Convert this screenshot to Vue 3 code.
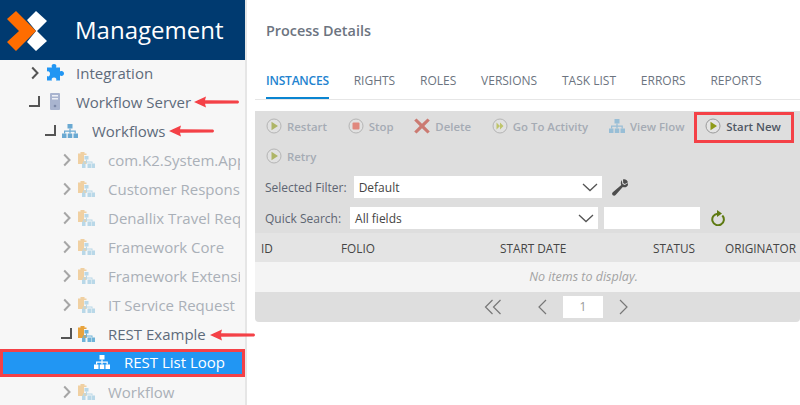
<script setup>
const rows = [
  { label: 'Integration', level: 0, toggle: 'chev', icon: 'puzzle', state: 'normal' },
  { label: 'Workflow Server', level: 0, toggle: 'elbow', icon: 'server', state: 'normal' },
  { label: 'Workflows', level: 1, toggle: 'elbow', icon: 'flow', state: 'normal' },
  { label: 'com.K2.System.Applications', level: 2, toggle: 'chev', icon: 'folder', state: 'dim' },
  { label: 'Customer Response Management', level: 2, toggle: 'chev', icon: 'folder', state: 'dim' },
  { label: 'Denallix Travel Request', level: 2, toggle: 'chev', icon: 'folder', state: 'dim' },
  { label: 'Framework Core', level: 2, toggle: 'chev', icon: 'folder', state: 'dim' },
  { label: 'Framework Extensions', level: 2, toggle: 'chev', icon: 'folder', state: 'dim' },
  { label: 'IT Service Request', level: 2, toggle: 'chev', icon: 'folder', state: 'dim' },
  { label: 'REST Example', level: 2, toggle: 'elbow', icon: 'folder', state: 'normal' },
  { label: 'REST List Loop', level: 3, toggle: 'none', icon: 'flow', state: 'selected' },
  { label: 'Workflow', level: 2, toggle: 'chev', icon: 'folder', state: 'dim' }
]
const tabs = ['Instances', 'Rights', 'Roles', 'Versions', 'Task List', 'Errors', 'Reports']
const tools = [
  { label: 'Restart', icon: 'play', off: true },
  { label: 'Stop', icon: 'stop', off: true },
  { label: 'Delete', icon: 'x', off: true },
  { label: 'Go To Activity', icon: 'go', off: true },
  { label: 'View Flow', icon: 'flow', off: true },
  { label: 'Start New', icon: 'play', off: false },
  { label: 'Retry', icon: 'play', off: true }
]
const cols = [
  { label: 'ID', w: 80 },
  { label: 'FOLIO', w: 159 },
  { label: 'START DATE', w: 153 },
  { label: 'STATUS', w: 72 },
  { label: 'ORIGINATOR', w: 75 }
]
const arrows = [
  { cls: 'a1' },
  { cls: 'a2' },
  { cls: 'a3' }
]
</script>

<template>
  <div class="page">
    <svg width="0" height="0" class="defs">
      <symbol id="flow" viewBox="0 0 16 14">
        <path d="M5.500 0h5v4.500h-5zM0 9.500h4.500V14H0zM5.750 9.500h4.500V14h-4.500zM11.500 9.500H16V14h-4.500z" />
        <path d="M7.400 4.500h1.200v2h5.200v3h-1.200V7.700H8.600v1.800H7.400V7.700H3.200v1.800H2v-3h5.400z" />
      </symbol>
    </svg>

    <aside class="side">
      <header class="brand">
        <svg class="logo" width="48" height="40" viewBox="0 0 48 40">
          <path fill="#fff" d="M27 9 36 0 47 10 37 20 47 30 36 40 27 31 36 20Z" />
          <path fill="#ff6d00" d="M7 8 16 0 36 20 16 40 7 31 19 20Z" />
        </svg>
        <span class="brand-name">Management</span>
      </header>
      <ul class="tree">
        <li
          v-for="r in rows"
          :key="r.label"
          class="row"
          :class="r.state"
          :style="{ paddingLeft: 28 + r.level * 16 + 'px' }"
        >
          <span class="toggle">
            <svg v-if="r.toggle === 'chev'" width="8" height="14" viewBox="0 0 8 14">
              <path d="M1.200 1.500 6.500 7l-5.300 5.500" fill="none" stroke="currentColor" stroke-width="2" />
            </svg>
            <svg v-else-if="r.toggle === 'elbow'" class="elbow" width="11" height="11" viewBox="0 0 11 11">
              <path d="M10 0v10H0" fill="none" stroke="currentColor" stroke-width="2" />
            </svg>
          </span>
          <span class="ico">
            <svg v-if="r.icon === 'puzzle'" width="18" height="17" viewBox="0 0 18 17">
              <path fill="#2196f3" d="M6 3.500C5 1.500 6 0 8 0s3 1.500 2 3.500H14V7.500C16 6.500 18 7.500 18 9.500s-2 3-4 2V16.500H10C11 15 10 13.500 8 13.500S5 15 6 16.500H1V12C2.500 13 4 12 4 9.800S2.500 6.700 1 7.500V3.500Z" />
            </svg>
            <svg v-else-if="r.icon === 'server'" class="server-ico" width="10" height="17" viewBox="0 0 10 17">
              <rect width="10" height="17" rx="1" fill="#a9b4cf" />
              <rect x="2" y="2" width="6" height="1.500" fill="#eef0f6" />
              <rect x="2" y="5" width="6" height="1.500" fill="#eef0f6" />
              <circle cx="5" cy="13" r="1.300" fill="#7c88a8" />
            </svg>
            <svg v-else-if="r.icon === 'flow'" class="flow-ico" width="16" height="14">
              <use href="#flow" />
            </svg>
            <svg v-else width="17" height="16" viewBox="0 0 17 16">
              <path fill="#e8a33d" d="M0 1.500h2.500V0h4v1.500H8.500V12H0Z" />
              <path fill="#f6f6f6" d="M6 3h6v6H6z" />
              <path fill="#6fb3d8" d="M6.500 4h4v3.500h-4zM4 11.500h3.500V16H4zM9.500 11.500H13V16H9.500zM13.500 11.500H17V16h-3.500z" />
              <path fill="#6fb3d8" d="M8 7.500h1v2h5.500v2h-1v-1H9v1H8v-1H6v1H5v-2h3z" />
            </svg>
          </span>
          <span class="lbl">{{ r.label }}</span>
        </li>
      </ul>
    </aside>

    <main class="main">
      <h1 class="title">Process Details</h1>
      <nav class="tabs">
        <span v-for="(t, i) in tabs" :key="t" class="tab" :class="{ on: i === 0 }">{{ t }}</span>
      </nav>

      <section class="panel">
        <div class="tools">
          <span v-for="t in tools" :key="t.label" class="tool" :class="{ off: t.off }">
            <svg v-if="t.icon === 'play'" width="16" height="16" viewBox="0 0 16 16">
              <circle cx="8" cy="8" r="7" fill="#e4e4e4" stroke="#9a9a9a" />
              <path d="M5.500 3.800 12 8l-6.500 4.200Z" fill="#8f9b17" />
            </svg>
            <svg v-else-if="t.icon === 'stop'" width="16" height="16" viewBox="0 0 16 16">
              <circle cx="8" cy="8" r="7" fill="#e4e4e4" stroke="#9a9a9a" />
              <rect x="4.500" y="4.500" width="7" height="7" rx="1" fill="#e2503f" />
            </svg>
            <svg v-else-if="t.icon === 'x'" width="16" height="16" viewBox="0 0 16 16">
              <path d="M2.500 .5 8 5.800 13.500 .5 15.800 2.500 10.300 8 15.800 13.500 13.500 15.500 8 10.200 2.500 15.500 .2 13.500 5.700 8 .2 2.500Z" fill="#c0392b" />
            </svg>
            <svg v-else-if="t.icon === 'go'" width="16" height="16" viewBox="0 0 16 16">
              <circle cx="8" cy="8" r="7" fill="#e4e4e4" stroke="#9a9a9a" />
              <path d="M4.500 4.500 8 8l-3.500 3.500zM8 4.500 11.500 8 8 11.500z" fill="#a9b31f" />
            </svg>
            <svg v-else class="tool-flow" width="16" height="14"><use href="#flow" /></svg>
            <span>{{ t.label }}</span>
          </span>
        </div>

        <div class="filter first">
          <label class="flabel">Selected Filter:</label>
          <span class="select">
            Default
            <svg width="16" height="9" viewBox="0 0 16 9"><path d="M1 1l7 6.500L15 1" fill="none" stroke="#555" stroke-width="1.300" /></svg>
          </span>
          <svg class="wrench" width="16" height="17" viewBox="0 0 16 17">
            <path fill="#4d4d4d" d="M10 1C8.600 2.500 8.500 4.500 9.300 6L.8 13.300C-.3 14.300 0 15.700.8 16.300S2.800 17 3.600 16.100L10.800 8C13 8.800 15 8.200 16 6L15.800 4 12.800 6 10.500 5 10 2.800ZM11 .6C13 -.2 15 1 16 3.200L12.800 5 11.200 4Z" />
          </svg>
        </div>

        <div class="filter">
          <label class="flabel quick">Quick Search:</label>
          <span class="select">
            All fields
            <svg width="16" height="9" viewBox="0 0 16 9"><path d="M1 1l7 6.500L15 1" fill="none" stroke="#555" stroke-width="1.300" /></svg>
          </span>
          <span class="search"></span>
          <svg class="refresh" width="15" height="16" viewBox="0 0 15 16">
            <path d="M12.300 5.500A5.800 5.800 0 1 1 7.500 3.700" fill="none" stroke="#5e7a12" stroke-width="2" />
            <path d="M7 0l5 3.500L7 7Z" fill="#5e7a12" />
          </svg>
        </div>

        <div class="thead">
          <span v-for="c in cols" :key="c.label" class="th" :style="{ width: c.w + 'px' }">{{ c.label }}</span>
        </div>
        <div class="empty">No items to display.</div>
        <div class="pager">
          <svg width="18" height="16" viewBox="0 0 18 16"><path d="M8.500 1 1.500 8l7 7M16.500 1l-7 7 7 7" fill="none" stroke="#777" stroke-width="1.200" /></svg>
          <svg class="prev" width="10" height="16" viewBox="0 0 10 16"><path d="M9 1 2 8l7 7" fill="none" stroke="#777" stroke-width="1.200" /></svg>
          <span class="pnum">1</span>
          <svg class="next" width="10" height="16" viewBox="0 0 10 16"><path d="M1 1l7 7-7 7" fill="none" stroke="#777" stroke-width="1.200" /></svg>
        </div>
      </section>
    </main>

    <div class="mark-select"></div>
    <div class="mark-start"></div>
    <svg v-for="a in arrows" :key="a.cls" class="arrow" :class="a.cls" width="46" height="12" viewBox="0 0 46 12">
      <path fill="#f44147" d="M0 6 12 .5 11 4.300 44 4.500Q46 6 44 7.500L11 7.700 12 11.500Z" />
    </svg>
  </div>
</template>

<style scoped>
.page {
  position: relative;
  display: flex;
  width: 800px;
  height: 405px;
  overflow: hidden;
  background: #fff;
  font-family: "Open Sans", "Noto Sans", sans-serif;
}
.defs { position: absolute; }
.side {
  flex: none;
  width: 245px;
  background: #f7f7f7;
  border-right: 2px solid #e6e6e6;
  overflow: hidden;
}
.brand {
  display: flex;
  align-items: center;
  height: 60px;
  background: #003a70;
  color: #fff;
}
.logo { flex: none; margin: 2px 27px 0 0; }
.brand-name { font-size: 24px; line-height: 60px; }
.tree {
  list-style: none;
  margin: -2px 0 0;
  padding: 0;
}
.row {
  display: flex;
  align-items: center;
  height: 29px;
  padding-right: 5px;
  font-size: 15px;
  color: #5e6b7b;
  white-space: nowrap;
}
.toggle {
  flex: none;
  display: flex;
  align-items: center;
  width: 18px;
  color: #555;
  padding-left: 3px;
  box-sizing: border-box;
}
.elbow { margin-left: -2px; }
.ico {
  flex: none;
  display: flex;
  align-items: center;
  width: 30px;
}
.server-ico { margin-left: 4px; }
.flow-ico { fill: #6aa9d2; }
.lbl { flex: 1; min-width: 0; overflow: hidden; }
.row.dim { color: #aab0b8; }
.row.dim .toggle { color: #a6a6a6; }
.row.dim .ico svg { opacity: .45; }
.row.selected {
  height: 26px;
  margin: 1px 0 2px 2px;
  background: #2196f3;
  color: #fff;
}
.row.selected .flow-ico { fill: #fff; }
.row.selected .toggle { margin-left: -2px; }
.main {
  flex: 1;
  min-width: 0;
  padding-left: 8px;
}
.title {
  margin: 0;
  padding: 21px 0 0 11px;
  font-size: 14.4px;
  line-height: 20px;
  font-weight: 600;
  color: #6c7480;
}
.tabs {
  display: flex;
  gap: 24.8px;
  height: 59px;
  box-sizing: border-box;
  padding: 31px 0 0 11px;
  border-bottom: 1px solid #e6e6e6;
}
.tab {
  height: 27px;
  box-sizing: border-box;
  font-size: 12px;
  line-height: 18px;
  text-transform: uppercase;
  color: #6c7480;
}
.tab.on {
  font-weight: 600;
  letter-spacing: -.2px;
  color: #2383cf;
  border-bottom: 2px solid #0a85d1;
}
.panel {
  margin-top: 11px;
  height: 211px;
  background: #dedede;
  border-radius: 0 0 4px 4px;
  overflow: hidden;
}
.tools {
  display: flex;
  flex-wrap: wrap;
  gap: 0 20.8px;
  padding: 0 0 0 11px;
}
.tool {
  display: flex;
  align-items: center;
  gap: 5px;
  height: 30px;
  font-size: 11.4px;
  font-weight: 600;
  color: #4f5663;
}
.tool.off { color: #a5abb4; }
.tool.off svg { opacity: .6; }
.tool-flow { fill: #6aa9d2; }
.filter {
  display: flex;
  align-items: center;
  height: 22px;
  padding-left: 10px;
  margin-top: 9px;
  font-size: 12px;
  color: #5d6572;
}
.filter.first { margin-top: 5px; }
.flabel { flex: none; margin-right: 7px; }
.flabel.quick { margin-right: 9px; }
.select {
  flex: none;
  display: flex;
  justify-content: space-between;
  align-items: center;
  box-sizing: border-box;
  width: 248px;
  height: 22px;
  padding: 0 4px 0 5px;
  background: #fff;
  color: #444;
}
.wrench { margin-left: 10px; }
.search {
  flex: none;
  width: 96px;
  height: 22px;
  margin-left: 6px;
  background: #fff;
}
.refresh { margin-left: 10px; }
.thead {
  display: flex;
  align-items: center;
  height: 29px;
  margin-top: 4px;
  padding-left: 6px;
  background: #e4e4e4;
}
.th {
  flex: none;
  font-size: 11.8px;
  color: #444;
  white-space: nowrap;
}
.empty {
  height: 30px;
  padding-left: 112px;
  line-height: 30px;
  text-align: center;
  font-size: 12.5px;
  font-style: italic;
  color: #a3a3a3;
  background: #f4f4f4;
}
.pager {
  display: flex;
  align-items: center;
  justify-content: center;
  height: 30px;
  padding-left: 80px;
}
.prev { margin-left: 35px; }
.pnum {
  width: 40px;
  height: 22px;
  margin: 0 16px;
  line-height: 22px;
  text-align: center;
  font-size: 12px;
  color: #999;
  background: #fff;
}
.next { margin-right: 22px; }
.mark-select {
  position: absolute;
  left: 0;
  top: 349px;
  width: 245px;
  height: 28px;
  box-sizing: border-box;
  border: 3px solid #f44147;
}
.mark-start {
  position: absolute;
  left: 694px;
  top: 112px;
  width: 100px;
  height: 31px;
  box-sizing: border-box;
  border: 3px solid #f44147;
}
.arrow { position: absolute; }
.a1 { left: 194px; top: 96px; }
.a2 { left: 169px; top: 125px; }
.a3 { left: 210px; top: 329px; }
</style>

<style>
html, body { margin: 0; }
</style>
